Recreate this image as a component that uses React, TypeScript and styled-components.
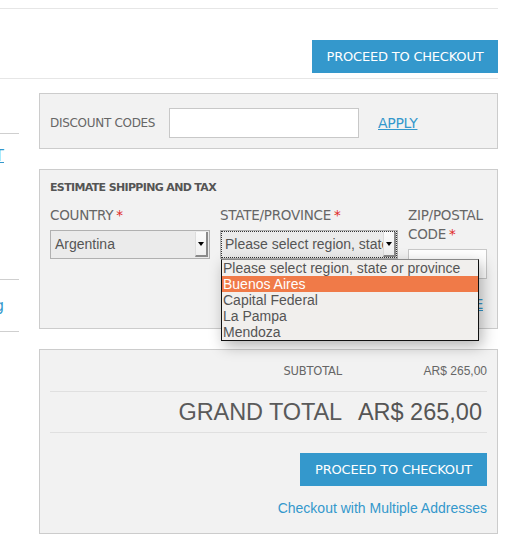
import React from "react";
import styled, { createGlobalStyle } from "styled-components";

const Global = createGlobalStyle`
  html, body { margin: 0; padding: 0; background: #fff; }
  body { font-family: "Liberation Sans", Arial, sans-serif; color: #555; }
`;

const LABEL_FONT = `"DejaVu Sans", "Liberation Sans", sans-serif`;
const BLUE = "#3498cc";

const Page = styled.div`
  width: 498px;
`;

const TopSpacer = styled.div`
  height: 8px;
  border-bottom: 1px solid #e6e6e6;
`;

const ActionRow = styled.div`
  display: flex;
  justify-content: flex-end;
  padding: 31px 0 5px;
  border-bottom: 1px solid #e6e6e6;
`;

const PrimaryButton = styled.button<{ $w: number }>`
  width: ${(p) => p.$w}px;
  height: 33px;
  border: none;
  background: ${BLUE};
  color: #fff;
  font-family: ${LABEL_FONT};
  font-size: 13px;
  letter-spacing: -0.2px;
  text-transform: uppercase;
  padding: 0;
  cursor: pointer;
`;

const Main = styled.div`
  display: flex;
  gap: 20px;
  margin-top: 14px;
`;

const Side = styled.div`
  width: 19px;
  flex: none;
  overflow: hidden;
  display: flex;
  flex-direction: column;
`;

const SideRule = styled.div<{ $mt: number }>`
  margin-top: ${(p) => p.$mt}px;
  border-top: 1px solid #cfcfcf;
`;

const SideLink = styled.div<{ $mt: number }>`
  margin-top: ${(p) => p.$mt}px;
  width: 4px;
  display: flex;
  justify-content: flex-end;
  white-space: nowrap;
  color: ${BLUE};
  font-family: ${LABEL_FONT};
  font-size: 15px;
  line-height: 16px;
  text-decoration: underline;
`;

const Content = styled.div`
  width: 459px;
  display: flex;
  flex-direction: column;
  gap: 20px;
`;

const Panel = styled.div`
  border: 1px solid #cccccc;
  background: #f2f2f2;
`;

const DiscountPanel = styled(Panel)`
  display: flex;
  align-items: center;
  padding: 14px 10px 10px;
  height: 30px;
`;

const Label = styled.span`
  font-family: ${LABEL_FONT};
  font-size: 12px;
  color: #666;
  text-transform: uppercase;
  letter-spacing: -0.3px;
`;

const DiscountLabel = styled(Label)`
  width: 119px;
  flex: none;
`;

const TextInput = styled.div<{ $w: number }>`
  width: ${(p) => p.$w}px;
  height: 28px;
  box-sizing: content-box;
  border: 1px solid #c8c8c8;
  background: #fff;
`;

const TextLink = styled.a`
  color: ${BLUE};
  font-family: ${LABEL_FONT};
  font-size: 14px;
  text-decoration: underline;
  letter-spacing: -0.3px;
`;

const ApplyLink = styled(TextLink)`
  margin-left: 19px;
`;

const EstimatePanel = styled(Panel)`
  padding: 10px 10px 16px;
  display: flex;
  flex-direction: column;
`;

const PanelTitle = styled.div`
  font-family: ${LABEL_FONT};
  font-weight: bold;
  font-size: 11px;
  letter-spacing: -0.65px;
  line-height: 16px;
  color: #555;
  text-transform: uppercase;
`;

const FieldRow = styled.div`
  display: flex;
  gap: 10px;
  margin-top: 10px;
`;

const Field = styled.div<{ $w: number }>`
  width: ${(p) => p.$w}px;
  display: flex;
  flex-direction: column;
  position: relative;
`;

const FieldLabel = styled(Label)`
  font-size: 13.5px;
  letter-spacing: -0.25px;
  line-height: 19px;
  margin-bottom: 5px;
`;

const Req = styled.span`
  color: #e02b27;
  margin-left: 3px;
`;

const SelectBox = styled.div<{ $focus?: boolean }>`
  height: 29px;
  box-sizing: border-box;
  border: 1px solid #b0b0b0;
  background: #ebebeb;
  display: flex;
  align-items: stretch;
  position: relative;
  outline: ${(p) => (p.$focus ? "1px dotted #333" : "none")};
  outline-offset: -2px;
`;

const SelectValue = styled.div`
  flex: 1;
  overflow: hidden;
  white-space: nowrap;
  font-family: "Liberation Sans", Arial, sans-serif;
  font-size: 14px;
  color: #555;
  line-height: 27px;
  padding-left: 4px;
`;

const SelectArrow = styled.div`
  width: 13px;
  flex: none;
  box-sizing: border-box;
  margin: 1px 1px 1px 0;
  background: linear-gradient(#fbfbfb, #f0f0f0);
  border-right: 2px solid #8a8a8a;
  border-bottom: 2px solid #8a8a8a;
  border-left: 1px solid #ddd;
  display: flex;
  align-items: center;
  justify-content: center;
`;

const Triangle = styled.span`
  width: 0;
  height: 0;
  border-left: 3.5px solid transparent;
  border-right: 3.5px solid transparent;
  border-top: 4px solid #000;
`;

const DropList = styled.ul`
  position: absolute;
  left: 0;
  top: 100%;
  margin: 1px 0 0;
  padding: 0;
  list-style: none;
  width: 258px;
  box-sizing: border-box;
  border: 1px solid #111;
  border-top-color: #888;
  background: #f1efed;
  box-shadow: 3px 5px 14px rgba(0, 0, 0, 0.3);
  z-index: 10;
`;

const DropItem = styled.li<{ $active?: boolean }>`
  height: 16px;
  line-height: 16px;
  padding-left: 1px;
  font-family: "Liberation Sans", Arial, sans-serif;
  font-size: 14px;
  white-space: nowrap;
  color: ${(p) => (p.$active ? "#fff" : "#555")};
  background: ${(p) => (p.$active ? "#f07a48" : "transparent")};
`;

const QuoteRow = styled.div`
  display: flex;
  justify-content: flex-end;
  margin-top: 17px;
  padding-right: 4px;
  line-height: 16px;
`;

const TotalsPanel = styled(Panel)`
  padding: 0 10px 17px;
  display: flex;
  flex-direction: column;
  align-items: stretch;
`;

const TotalRow = styled.div<{ $h: number; $line?: boolean }>`
  display: grid;
  grid-template-columns: 1fr 145px;
  align-items: center;
  height: ${(p) => p.$h}px;
  border-bottom: ${(p) => (p.$line ? "1px solid #e0e0e0" : "none")};
`;

const TotalLabel = styled.span<{ $big?: boolean }>`
  text-align: right;
  font-family: ${(p) => (p.$big ? `"Liberation Sans", Arial, sans-serif` : LABEL_FONT)};
  font-size: ${(p) => (p.$big ? "23.5px" : "11.5px")};
  color: ${(p) => (p.$big ? "#5a5a5a" : "#666")};
  letter-spacing: ${(p) => (p.$big ? "-0.1px" : "-0.2px")};
  text-transform: uppercase;
`;

const TotalValue = styled.span<{ $big?: boolean }>`
  text-align: right;
  font-family: "Liberation Sans", Arial, sans-serif;
  font-size: ${(p) => (p.$big ? "23.5px" : "12px")};
  color: ${(p) => (p.$big ? "#555" : "#666")};
  padding-right: ${(p) => (p.$big ? "5px" : "0")};
`;

const CheckoutArea = styled.div`
  display: flex;
  flex-direction: column;
  align-items: flex-end;
  margin-top: 20px;
  gap: 14px;
`;

const MultiLink = styled.a`
  color: ${BLUE};
  font-family: "Liberation Sans", Arial, sans-serif;
  font-size: 14px;
  line-height: 16px;
  text-decoration: none;
`;

const regions = ["Please select region, state or province", "Buenos Aires", "Capital Federal", "La Pampa", "Mendoza"];

export default function App() {
  return (
    <Page>
      <Global />
      <TopSpacer />
      <ActionRow>
        <PrimaryButton $w={186}>Proceed to Checkout</PrimaryButton>
      </ActionRow>
      <Main>
        <Side>
          <SideRule $mt={40} />
          <SideLink $mt={14}>EDIT</SideLink>
          <SideRule $mt={115} />
          <SideLink $mt={18}>Log</SideLink>
          <SideRule $mt={17} />
        </Side>
        <Content>
          <DiscountPanel>
            <DiscountLabel>Discount Codes</DiscountLabel>
            <TextInput $w={188} />
            <ApplyLink>APPLY</ApplyLink>
          </DiscountPanel>

          <EstimatePanel>
            <PanelTitle>Estimate Shipping and Tax</PanelTitle>
            <FieldRow>
              <Field $w={161}>
                <FieldLabel>
                  Country<Req>*</Req>
                </FieldLabel>
                <SelectBox>
                  <SelectValue>Argentina</SelectValue>
                  <SelectArrow>
                    <Triangle />
                  </SelectArrow>
                </SelectBox>
              </Field>
              <Field $w={178}>
                <FieldLabel>
                  State/Province<Req>*</Req>
                </FieldLabel>
                <SelectBox $focus>
                  <SelectValue>Please select region, state or province</SelectValue>
                  <SelectArrow>
                    <Triangle />
                  </SelectArrow>
                  <DropList>
                    {regions.map((r) => (
                      <DropItem key={r} $active={r === "Buenos Aires"}>
                        {r}
                      </DropItem>
                    ))}
                  </DropList>
                </SelectBox>
              </Field>
              <Field $w={79}>
                <FieldLabel>
                  Zip/Postal Code<Req>*</Req>
                </FieldLabel>
                <TextInput $w={77} />
              </Field>
            </FieldRow>
            <QuoteRow>
              <TextLink>GET A QUOTE</TextLink>
            </QuoteRow>
          </EstimatePanel>

          <TotalsPanel>
            <TotalRow $h={41} $line>
              <TotalLabel>Subtotal</TotalLabel>
              <TotalValue>AR$ 265,00</TotalValue>
            </TotalRow>
            <TotalRow $h={40} $line>
              <TotalLabel $big>Grand Total</TotalLabel>
              <TotalValue $big>AR$ 265,00</TotalValue>
            </TotalRow>
            <CheckoutArea>
              <PrimaryButton $w={187}>Proceed to Checkout</PrimaryButton>
              <MultiLink>Checkout with Multiple Addresses</MultiLink>
            </CheckoutArea>
          </TotalsPanel>
        </Content>
      </Main>
    </Page>
  );
}
